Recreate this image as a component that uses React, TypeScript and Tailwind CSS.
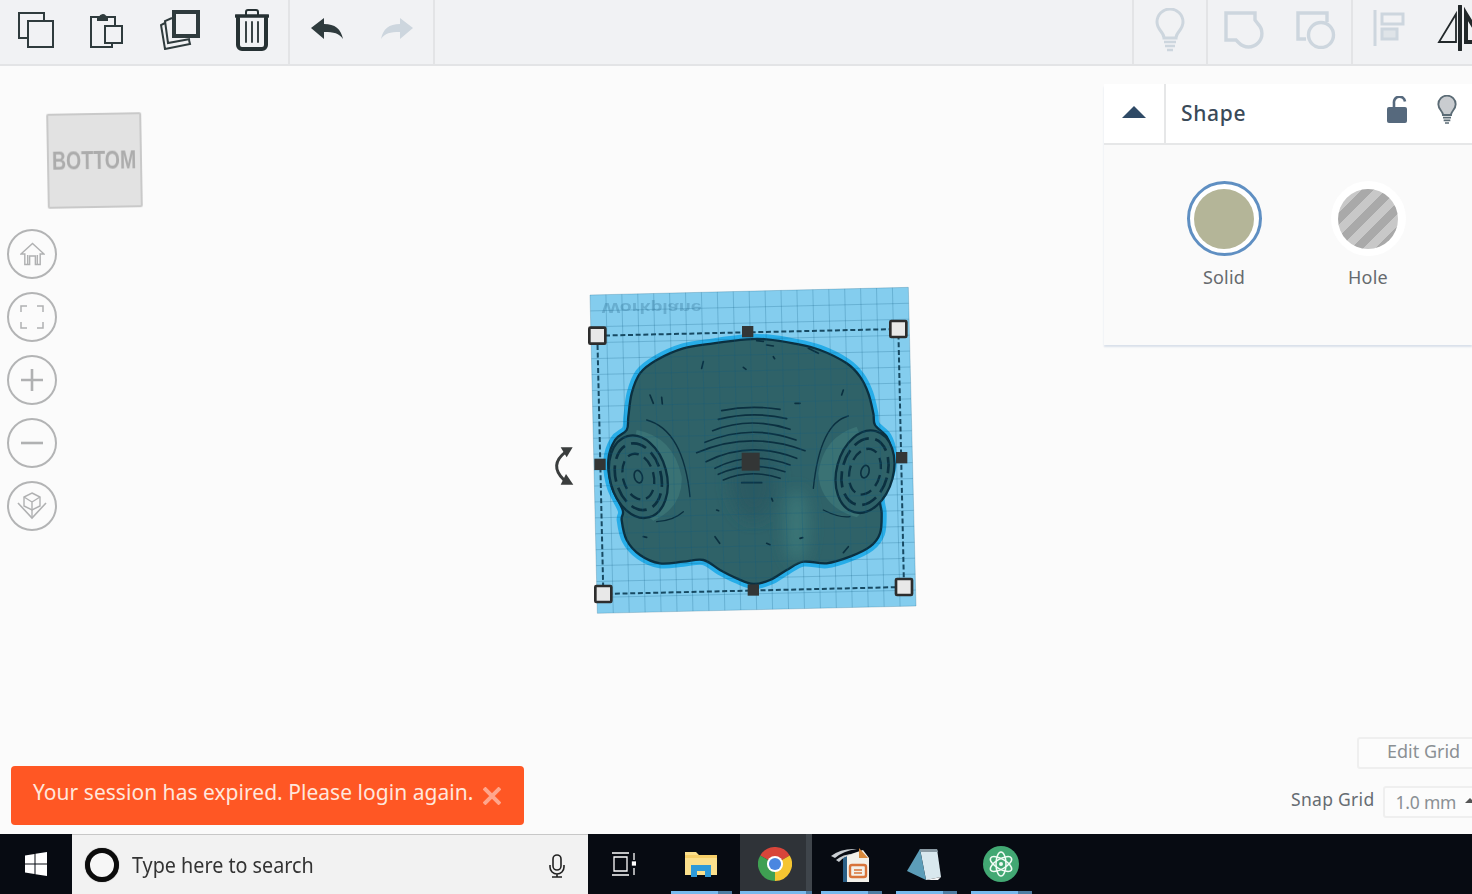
import React from "react";

const smooth = (p: number[][]) => {
  const n = p.length;
  let d = `M${p[0][0]} ${p[0][1]}`;
  for (let i = 0; i < n; i++) {
    const p0 = p[(i - 1 + n) % n], p1 = p[i], p2 = p[(i + 1) % n], p3 = p[(i + 2) % n];
    const c1 = [p1[0] + (p2[0] - p0[0]) / 6, p1[1] + (p2[1] - p0[1]) / 6];
    const c2 = [p2[0] - (p3[0] - p1[0]) / 6, p2[1] - (p3[1] - p1[1]) / 6];
    d += `C${c1[0]} ${c1[1]} ${c2[0]} ${c2[1]} ${p2[0]} ${p2[1]}`;
  }
  return d + "Z";
};

const outline = [
  [620,178],[680,178],[760,190],[840,210],[920,250],[960,290],[985,340],[1000,400],[1005,435],[1040,470],[1055,520],[1050,580],[1020,650],[1025,700],[1020,760],[990,800],[930,830],[860,850],[790,845],[740,870],[690,900],[640,912],[590,895],[540,870],[490,840],[430,845],[360,850],[300,825],[260,780],[245,720],[248,690],[215,620],[205,540],[225,480],[260,450],[265,410],[275,340],[300,280],[350,240],[430,205],[520,190],
];
const maskPath = smooth(outline);

const lerp = (a: number[], b: number[], t: number) => [a[0] + (b[0] - a[0]) * t, a[1] + (b[1] - a[1]) * t];
const TL = [150, 45], TR = [1105, 22], BR = [1128, 978], BL = [172, 1000];
const cells = Array.from({ length: 21 }, (_, i) => i / 20);

const specks = ["M490 245l-5 20","M610 262l8 6","M330 345l10 25","M365 352l2 20","M910 330l-5 15","M765 370l15 0","M695 655l3 8","M525 770l14 20","M310 770l10 2","M680 790l10 4","M925 800l-15 18","M780 775l8-2","M530 690l6 2","M650 182l20 2","M680 195l20 3","M805 205l30 15","M700 230l4 6"];
const arcs = ["M545 392Q630 374 720 388","M535 418Q640 392 740 416","M518 452Q630 408 750 448","M495 487Q630 430 768 480","M470 518Q630 450 795 512","M498 545Q630 480 770 535","M525 565Q630 510 750 555","M535 583Q630 540 735 575","M550 600Q630 565 720 595","M605 608L665 608"];

function Handle({ x, y }: { x: number; y: number }) {
  return <rect x={x - 24} y={y - 24} width={48} height={48} fill="#e8e8e8" stroke="#2d2d2d" strokeWidth={8} rx={3} />;
}
function Mid({ x, y, s = 34 }: { x: number; y: number; s?: number }) {
  return <rect x={x - s / 2} y={y - s / 2} width={s} height={s} fill="#333636" />;
}
function Filter({ cx, cy, rot }: { cx: number; cy: number; rot: number }) {
  return (
    <g transform={`rotate(${rot} ${cx} ${cy})`} fill="none" stroke="#0b3040">
      <ellipse cx={cx} cy={cy} rx={85} ry={126} fill="#2f6268" strokeWidth={7} />
      <ellipse cx={cx} cy={cy} rx={68} ry={102} strokeWidth={8} strokeDasharray="48 20" />
      <ellipse cx={cx} cy={cy} rx={46} ry={70} strokeWidth={7} strokeDasharray="34 18" />
      <ellipse cx={cx} cy={cy} rx={12} ry={19} strokeWidth={5} />
    </g>
  );
}

function Workplane() {
  return (
    <svg viewBox="0 0 1170 1020" className="absolute left-[540px] top-[214px] w-[390px] h-[340px]">
      <defs>
        <filter id="soft" x="-50%" y="-50%" width="200%" height="200%"><feGaussianBlur stdDeviation="22" /></filter>
        <filter id="fuzz" x="-10%" y="-50%" width="120%" height="200%"><feGaussianBlur stdDeviation="1.6" /></filter>
        <clipPath id="maskClip"><path d={maskPath} /></clipPath>
      </defs>
      <polygon points="150,45 1105,22 1128,978 172,1000" fill="#84cdee" />
      <text x="185" y="-70" transform="scale(1 -1)" filter="url(#fuzz)" fontFamily="'Liberation Sans',sans-serif" fontWeight="700" fontSize="42" textLength="300" lengthAdjust="spacingAndGlyphs" fill="#68aed0">Workplane</text>
      <path d={maskPath} fill="none" stroke="#27ade8" strokeWidth={30} />
      <path d={maskPath} fill="#2f6268" stroke="#0b3040" strokeWidth={7} />
      <g clipPath="url(#maskClip)" filter="url(#soft)">
        <ellipse cx={770} cy={740} rx={35} ry={110} fill="#3b7677" />
        <ellipse cx={640} cy={600} rx={70} ry={120} fill="#2a5a62" />
      </g>
      <path d="M290 450Q400 470 425 590Q430 680 340 722L250 650Z" fill="#3a7274" />
      <path d="M950 440Q850 470 835 580Q840 680 950 712L1030 640Z" fill="#3a7274" />
      <g fill="none" stroke="#0b3040" strokeWidth={4} strokeLinecap="round">
        <path d="M320 420Q430 450 450 650" />
        <path d="M350 725Q400 722 430 695" />
        <path d="M925 408Q840 430 820 625" />
        <path d="M850 690Q900 715 930 710" />
      </g>
      <Filter cx={295} cy={590} rot={-15} />
      <Filter cx={975} cy={575} rot={15} />
      <g fill="none" stroke="#0b3040" strokeWidth={5} strokeLinecap="round">
        {arcs.map((d) => <path key={d} d={d} />)}
        {specks.map((d) => <path key={d} d={d} />)}
      </g>
      <g stroke="#0f5a80" strokeOpacity={0.3} strokeWidth={2.4}>
        {cells.map((t) => {
          const a = lerp(TL, TR, t), b = lerp(BL, BR, t), c = lerp(TL, BL, t), d = lerp(TR, BR, t);
          return (
            <g key={t}>
              <line x1={a[0]} y1={a[1]} x2={b[0]} y2={b[1]} />
              <line x1={c[0]} y1={c[1]} x2={d[0]} y2={d[1]} />
            </g>
          );
        })}
      </g>
      <polygon points="172,167 1075,147 1092,921 190,942" fill="none" stroke="#174a63" strokeWidth={6} strokeDasharray="15 8" />
      <Handle x={172} y={167} />
      <Handle x={1075} y={147} />
      <Handle x={1092} y={921} />
      <Handle x={190} y={942} />
      <Mid x={623} y={155} />
      <Mid x={180} y={553} />
      <Mid x={1085} y={533} />
      <Mid x={640} y={930} />
      <Mid x={632} y={545} s={54} />
      <g fill="none" stroke="#3a3d3d" strokeWidth={9}>
        <path d="M78 515Q25 555 72 600" />
      </g>
      <path d="M62 502H98L80 532Z" fill="#3a3d3d" />
      <path d="M62 614H100L78 582Z" fill="#3a3d3d" />
    </svg>
  );
}

const dark = "#2f3b3d";
function CopyIcon() {
  return (
    <svg viewBox="0 0 36 36" className="w-9 h-9" fill="none" stroke={dark} strokeWidth={2}>
      <path d="M26 9V1H1v25h9" />
      <rect x="10" y="9" width="25" height="26" />
    </svg>
  );
}
function PasteIcon() {
  return (
    <svg viewBox="0 0 34 36" className="w-[34px] h-9" fill="none" stroke={dark} strokeWidth={2}>
      <path d="M10 5H2v30h21v-4" />
      <path d="M15 5h11v9" />
      <path d="M9 8V5h2a3 3 0 0 1 5-1 3 3 0 0 1 1 1h1v3z" fill={dark} />
      <rect x="16" y="14" width="17" height="17" />
    </svg>
  );
}
function DupIcon() {
  return (
    <svg viewBox="0 0 40 40" className="w-10 h-10" fill="none" stroke={dark}>
      <rect x="14" y="2" width="24" height="24" strokeWidth={4} />
      <path d="M12 8L5 11l3 22 22-4" strokeWidth={2} />
      <path d="M5 13L1 15l4 24 25-5-1-4" strokeWidth={2} />
    </svg>
  );
}
function TrashIcon() {
  return (
    <svg viewBox="0 0 34 42" className="w-[34px] h-[42px]" fill="none" stroke="#263133" strokeLinecap="round">
      <path d="M11 6V3a2 2 0 0 1 2-2h8a2 2 0 0 1 2 2v3" strokeWidth={2} />
      <path d="M1 7h32" strokeWidth={3.4} />
      <path d="M3 9v27a4 4 0 0 0 4 4h20a4 4 0 0 0 4-4V9" strokeWidth={4} />
      <path d="M11 13v20M17 13v20M23 13v20" strokeWidth={1.8} />
    </svg>
  );
}
function ArrowBack({ color, flip }: { color: string; flip?: boolean }) {
  return (
    <svg viewBox="0 0 32 24" className={flip ? "w-8 h-6 -scale-x-100" : "w-8 h-6"}>
      <path d="M0 11L13 1v6c11 0 17 5 19 15-4-6-9-7-19-7v7z" fill={color} />
    </svg>
  );
}
const faint = "#cdd6de";
function BulbIcon({ color = faint, fill = "none", w = 30, sw = 3 }: { color?: string; fill?: string; w?: number; sw?: number }) {
  return (
    <svg viewBox="0 0 30 44" style={{ width: w, height: (w * 44) / 30 }} fill="none" stroke={color}>
      <path d="M9 30c0-6-7-8-7-16a13 13 0 0 1 26 0c0 8-7 10-7 16z" strokeWidth={sw} fill={fill} />
      <path d="M9 34h12M10 38h10M12 42h6" strokeWidth={2.4} />
    </svg>
  );
}
function GroupIcon() {
  return (
    <svg viewBox="0 0 40 38" className="w-10 h-[38px]" fill="none" stroke={faint} strokeWidth={3.4}>
      <path d="M2 2h29v7l3 4a12 12 0 1 1-19 19l-3-3H2z" />
    </svg>
  );
}
function UngroupIcon() {
  return (
    <svg viewBox="0 0 40 38" className="w-10 h-[38px]" fill="none" stroke={faint} strokeWidth={3.4}>
      <path d="M10 28H2V2h29v9" />
      <circle cx="25" cy="24" r="12.5" />
    </svg>
  );
}
function AlignIcon() {
  return (
    <svg viewBox="0 0 32 36" className="w-8 h-9" fill="none" stroke={faint}>
      <path d="M2 0v36" strokeWidth={3} />
      <rect x="9" y="4" width="21" height="10" strokeWidth={3} />
      <rect x="9" y="19" width="15" height="10" strokeWidth={3} fill="#dfe4e8" />
    </svg>
  );
}
function MirrorIcon() {
  return (
    <svg viewBox="0 0 40 46" className="w-10 h-[46px] shrink-0 ml-[12px]" fill="none" stroke="#22282a">
      <path d="M19 9L2 37h17z" strokeWidth={1.8} />
      <path d="M23 1v44" strokeWidth={4} strokeLinecap="round" />
      <path d="M29 9l17 28H29z" strokeWidth={4} />
    </svg>
  );
}

function Tool({ children, w = "w-[72px]" }: { children: React.ReactNode; w?: string }) {
  return <div className={`${w} h-full flex items-center justify-center shrink-0`}>{children}</div>;
}

function Toolbar() {
  return (
    <div className="h-[66px] shrink-0 flex bg-[#f1f2f4] border-b-2 border-[#e3e4e6]">
      <div className="w-[290px] flex border-r-2 border-[#e3e4e6] pb-[5px]">
        <Tool><CopyIcon /></Tool>
        <Tool w="w-[68px]"><PasteIcon /></Tool>
        <Tool w="w-[80px]"><DupIcon /></Tool>
        <Tool w="w-[64px]"><TrashIcon /></Tool>
      </div>
      <div className="w-[145px] flex border-r-2 border-[#e3e4e6] pl-[1px] pb-[7px]">
        <Tool w="w-[71px]"><ArrowBack color={dark} /></Tool>
        <Tool w="w-[69px]"><ArrowBack color={faint} flip /></Tool>
      </div>
      <div className="flex-1" />
      <div className="w-[74px] flex justify-center border-l-2 border-[#e3e4e6] pb-[5px]">
        <Tool><BulbIcon /></Tool>
      </div>
      <div className="w-[145px] flex border-l-2 border-[#e3e4e6] pb-[5px]">
        <Tool><GroupIcon /></Tool>
        <Tool><UngroupIcon /></Tool>
      </div>
      <div className="w-[121px] flex items-center border-l-2 border-[#e3e4e6] overflow-hidden pb-[8px]">
        <div className="w-[72px] flex justify-center shrink-0"><AlignIcon /></div>
        <MirrorIcon />
      </div>
    </div>
  );
}

function NavBtn({ children }: { children: React.ReactNode }) {
  return <div className="w-[50px] h-[50px] rounded-full border-2 border-[#b3b4b5] flex items-center justify-center">{children}</div>;
}
const g = "#b0b1b2";
function Nav() {
  return (
    <div className="absolute left-[7px] top-[163px] flex flex-col gap-[13px]">
      <NavBtn>
        <svg viewBox="0 0 26 24" className="w-[25px] h-[24px]" fill="none" stroke={g} strokeWidth={1.5}>
          <path d="M1 12L13 1l12 11h-4v11h-5v-9h-6v9H5V12z" />
          <path d="M8 23V13M18 23V13" />
        </svg>
      </NavBtn>
      <NavBtn>
        <svg viewBox="0 0 24 24" className="w-6 h-6" fill="none" stroke={g} strokeWidth={1.5}>
          <path d="M1 7V1h6M17 1h6v6M23 17v6h-6M7 23H1v-6" />
        </svg>
      </NavBtn>
      <NavBtn>
        <svg viewBox="0 0 24 24" className="w-6 h-6" fill="none" stroke={g} strokeWidth={2.6}><path d="M12 1v22M1 12h22" /></svg>
      </NavBtn>
      <NavBtn>
        <svg viewBox="0 0 24 24" className="w-6 h-6" fill="none" stroke={g} strokeWidth={2.6}><path d="M1 12h22" /></svg>
      </NavBtn>
      <NavBtn>
        <svg viewBox="0 0 30 30" className="w-[30px] h-[30px]" fill="none" stroke={g} strokeWidth={1.4}>
          <path d="M15 2l8 4v9l-8 4-8-4V6z" />
          <path d="M7 6l8 5 8-5M15 11v8" />
          <path d="M1 12l14 15 14-15" strokeWidth={1.6} />
          <path d="M15 19v8" />
        </svg>
      </NavBtn>
    </div>
  );
}

function ShapePanel() {
  return (
    <div className="absolute right-0 top-[18px] w-[368px] h-[261px] flex flex-col bg-[#fafafa] rounded-tl-[3px] shadow-[0_2px_2px_#d9e0ea]">
      <div className="h-[61px] shrink-0 flex items-center bg-white border-b-2 border-[#e6e7e8]">
        <div className="w-[62px] h-full flex items-center justify-center border-r-2 border-[#e6e7e8]">
          <div className="w-0 h-0 border-l-[12px] border-r-[12px] border-b-[12px] border-l-transparent border-r-transparent border-b-[#2f4a66] mb-[4px]" />
        </div>
        <span className="ml-[15px] text-[21px] tracking-[0.7px] text-[#3a4a58] font-['Noto_Sans',sans-serif] font-medium">Shape</span>
        <div className="ml-auto mr-[15px] flex items-center gap-[30px] -mt-[7px]">
          <svg viewBox="0 0 20 27" className="w-5 h-[27px]">
            <path d="M7 12V7a5.500 5.500 0 0 1 11-1.500" fill="none" stroke="#56697d" strokeWidth={2.6} />
            <rect x="0" y="11" width="20" height="16" rx="2" fill="#56697d" />
          </svg>
          <BulbIcon color="#5b6b75" fill="#c9ccd0" w={20} sw={2.8} />
        </div>
      </div>
      <div className="flex pl-[83px] pt-[36px] gap-[70px] font-['Noto_Sans',sans-serif]">
        <div className="w-[74px] flex flex-col items-center">
          <div className="w-[75px] h-[75px] shrink-0 rounded-full border-[3px] border-[#5f8fc2] bg-white flex items-center justify-center">
            <div className="w-[60px] h-[60px] rounded-full bg-[#b4b598]" />
          </div>
          <span className="mt-[9px] text-[18px] leading-[24px] tracking-[0.2px] text-[#666a6e]">Solid</span>
        </div>
        <div className="w-[74px] flex flex-col items-center">
          <div className="w-[75px] h-[75px] shrink-0 rounded-full bg-white flex items-center justify-center">
            <div className="w-[60px] h-[60px] rounded-full bg-[repeating-linear-gradient(135deg,#a9a9a9_0,#a9a9a9_9px,#c8c8c8_9px,#c8c8c8_17px)]" />
          </div>
          <span className="mt-[9px] text-[18px] leading-[24px] tracking-[0.2px] text-[#666a6e]">Hole</span>
        </div>
      </div>
    </div>
  );
}

function GridControls() {
  return (
    <div className="absolute left-[1291px] bottom-[16px] w-[220px] flex flex-col font-['Noto_Sans',sans-serif]">
      <div className="ml-[66px] w-[140px] h-[32px] pl-[28px] pb-[4px] flex items-center rounded-[3px] border-2 border-[#efefef] bg-[#fcfcfc] text-[18px] text-[#8b9094]">Edit Grid</div>
      <div className="mt-[17px] flex items-center">
        <span className="text-[17.500px] leading-none -mt-[4px] tracking-[0.3px] text-[#666c72]">Snap Grid</span>
        <div className="ml-[8px] w-[120px] h-[32px] pl-[11px] flex items-center rounded-[3px] border-2 border-[#efefef] bg-[#fcfcfc] text-[17.500px] text-[#8b9094]">
          <span className="tracking-[-0.2px]">1.0 mm</span>
          <div className="ml-[9px] -mt-[4px] w-0 h-0 border-l-[5px] border-r-[5px] border-b-[5px] border-l-transparent border-r-transparent border-b-[#555]" />
        </div>
      </div>
    </div>
  );
}

function Toast() {
  return (
    <div className="absolute left-[11px] bottom-[9px] w-[513px] h-[59px] rounded-[4px] bg-[#ff5724] flex items-center pl-[22px] font-['Noto_Sans',sans-serif]">
      <span className="text-[21px] tracking-[0.03px] text-[#ffe6dc] whitespace-nowrap -mt-[5px]">Your session has expired. Please login again.</span>
      <svg viewBox="0 0 18 18" className="w-[18px] h-[18px] ml-[10px] mt-[1px]" stroke="#ffa68c" strokeWidth={4}><path d="M1 1l16 16M17 1L1 17" /></svg>
    </div>
  );
}

function Slot({ children, className }: { children: React.ReactNode; className: string }) {
  return <div className={`h-full shrink-0 flex items-center justify-center ${className}`}>{children}</div>;
}
function Under({ split }: { split: number }) {
  return (
    <div className="absolute left-0 right-0 bottom-0 h-[3px] flex">
      <div className="bg-[#76b9ed] flex-1" />
      <div className="bg-[#4d7da3]" style={{ width: split }} />
    </div>
  );
}

function Taskbar() {
  return (
    <div className="h-[60px] shrink-0 flex bg-[#070b12]">
      <div className="w-[72px] flex items-center justify-center">
        <svg viewBox="0 0 22 24" className="w-[22px] h-6" fill="#fff">
          <path d="M0 3.5L9.5 2v9.500H0zM10.500 1.800L22 0v11.500H10.500zM0 12.500h9.500V22L0 20.500zM10.500 12.500H22V24l-11.500-1.800z" />
        </svg>
      </div>
      <div className="w-[516px] flex items-center bg-[#f2f2f2] border-t border-[#c8c8c8] font-['Noto_Sans',sans-serif]">
        <div className="ml-[13px] w-[34px] h-[34px] rounded-full border-[5px] border-[#0b0b0b] bg-[#f6f6f6] shadow-[0_0_1px_#555]" />
        <span className="ml-[13px] text-[21px] text-[#333] leading-none mt-[2px] scale-x-[0.94] origin-left">Type here to search</span>
        <svg viewBox="0 0 18 24" className="ml-auto mr-[22px] w-[18px] h-6 mt-[2px]" fill="none" stroke="#222" strokeWidth={1.6}>
          <rect x="5" y="1" width="8" height="15" rx="4" />
          <path d="M2 11v2a7 7 0 0 0 14 0v-2M9 20v3M4 23h10" />
        </svg>
      </div>
      <Slot className="w-[72px]">
        <svg viewBox="0 0 24 24" className="w-6 h-6" fill="none" stroke="#fff" strokeWidth={1.3}>
          <path d="M0 1h17M0 23h17M2 5h13v14H2zM22 1v7M22 16v7" />
          <rect x="20.500" y="10" width="3" height="3" fill="#fff" />
        </svg>
      </Slot>
      <Slot className="relative w-[61px] ml-[11px]">
        <svg viewBox="0 0 32 28" className="w-8 h-7 -ml-[2px]">
          <path d="M0 2h11l3 3h18v20H0z" fill="#fbe08c" />
          <path d="M0 5h32v3H0z" fill="#f6cf68" />
          <path d="M6 27V15h20v12h-6v-6h-8v6z" fill="#2e9ad8" />
        </svg>
        <Under split={14} />
      </Slot>
      <Slot className="relative w-[72px] ml-[8px] bg-[#2f3338]">
        <svg viewBox="0 0 24 24" className="w-[34px] h-[34px] -ml-[2px]">
          <path d="M12 12L1.600 6A12 12 0 0 1 22.400 6Z" fill="#d8453a" />
          <path d="M12 12L22.400 6A12 12 0 0 1 12 24Z" fill="#f5c531" />
          <path d="M12 12L12 24A12 12 0 0 1 1.600 6Z" fill="#3fa052" />
          <circle cx="12" cy="12" r="5.700" fill="#fff" />
          <circle cx="12" cy="12" r="4.300" fill="#4a86e0" />
        </svg>
        <div className="absolute right-0 top-0 bottom-0 w-[6px] bg-[#3f454b]" />
        <Under split={6} />
      </Slot>
      <Slot className="relative w-[61px] ml-[9px]">
        <svg viewBox="0 0 38 36" className="w-[38px] h-9 -ml-[3px]">
          <path d="M14 10l18-6 6 8v24H14z" fill="#f3f1ea" />
          <path d="M28 2l9 10h-9z" fill="#d98a3c" />
          <path d="M12 12v24h4V10z" fill="#2a5f86" />
          <rect x="19" y="19" width="16" height="12" rx="2" fill="none" stroke="#d8743a" strokeWidth={2.4} />
          <path d="M23 24h8M23 27h8" stroke="#d8743a" strokeWidth={1.6} />
          <path d="M0 10Q10 2 26 3Q12 5 4 12ZM5 14Q12 8 22 8Q13 10 8 16Z" fill="#c9ced2" />
        </svg>
        <Under split={14} />
      </Slot>
      <Slot className="relative w-[61px] ml-[14px]">
        <svg viewBox="0 0 34 32" className="w-[34px] h-8 -ml-[5px]">
          <path d="M13 1h17l4 28-15 3z" fill="#d9e8ee" />
          <path d="M13 1h17l1 3H12z" fill="#8a9aa3" />
          <path d="M13 1L0 23l19 9z" fill="#5c9db8" />
          <path d="M19 32l15-3-3 3z" fill="#f4f4f4" />
        </svg>
        <Under split={14} />
      </Slot>
      <Slot className="relative w-[61px] ml-[14px]">
        <svg viewBox="0 0 36 36" className="w-9 h-9 -ml-[2px]" fill="none" stroke="#f2fbf5" strokeWidth={1.5}>
          <circle cx="18" cy="18" r="18" fill="#42a873" stroke="none" />
          <ellipse cx="18" cy="18" rx="12" ry="5" transform="rotate(30 18 18)" />
          <ellipse cx="18" cy="18" rx="12" ry="5" transform="rotate(-30 18 18)" />
          <ellipse cx="18" cy="18" rx="12" ry="5" transform="rotate(90 18 18)" />
          <circle cx="18" cy="18" r="2" fill="#f2fbf5" stroke="none" />
        </svg>
        <Under split={14} />
      </Slot>
    </div>
  );
}

export default function App() {
  return (
    <div className="w-[1472px] h-[894px] overflow-hidden flex flex-col bg-[#fbfbfb]">
      <Toolbar />
      <div className="relative flex-1 overflow-hidden">
        <div className="absolute left-[47px] top-[47px] w-[95px] h-[95px] -rotate-1 bg-[#e2e2e2] border-2 border-[#c9c9c9] rounded-[2px] flex items-center justify-center blur-[0.4px]">
          <span className="text-[26px] font-bold text-[#acacac] scale-x-[0.75] font-['Liberation_Sans',sans-serif]">BOTTOM</span>
        </div>
        <Nav />
        <Workplane />
        <ShapePanel />
        <GridControls />
        <Toast />
      </div>
      <Taskbar />
    </div>
  );
}
